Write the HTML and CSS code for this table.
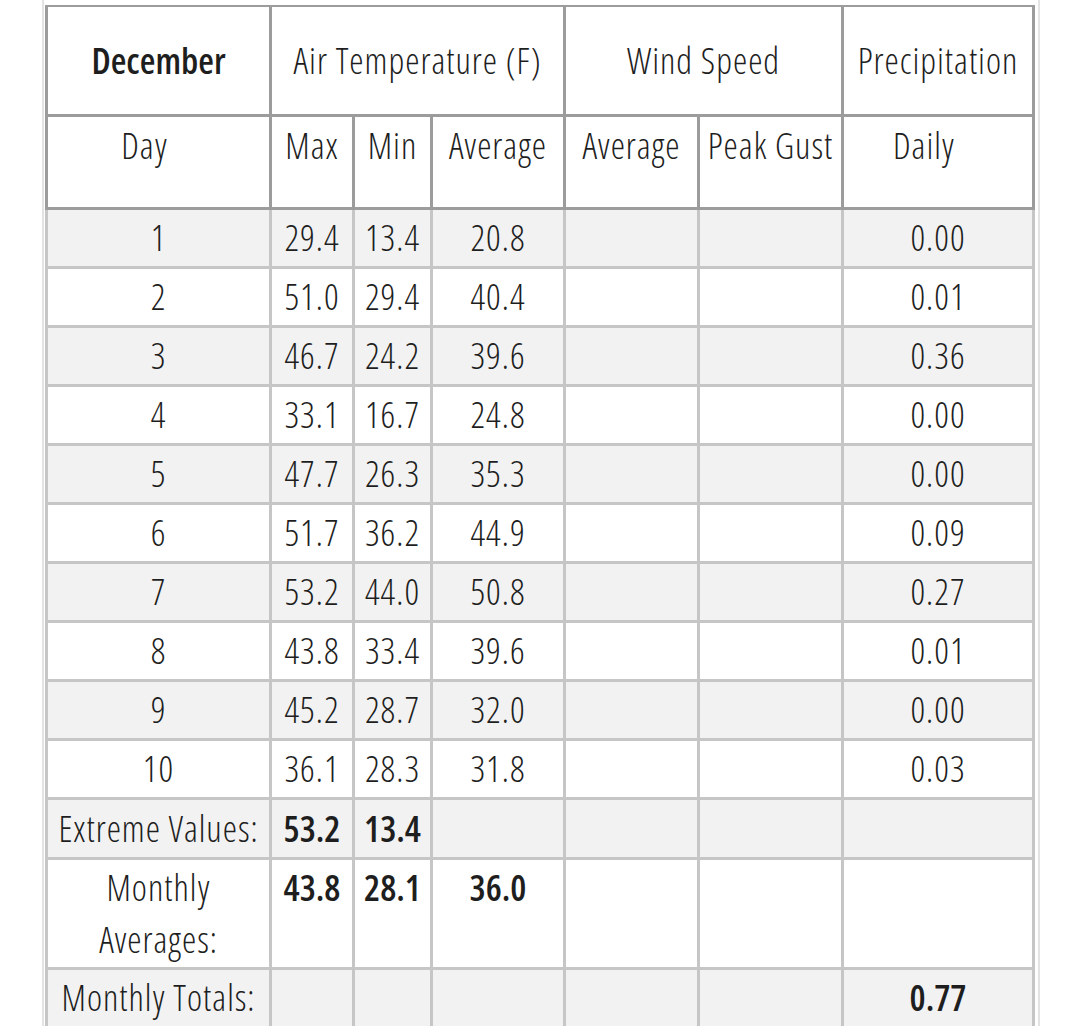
FILE: index.html
```html
<!DOCTYPE html>
<html lang="en">
<head>
<meta charset="utf-8">
<title>December Weather</title>
<link rel="stylesheet" href="styles.css">
</head>
<body>
<div class="page">
  <table class="wx">
    <colgroup>
      <col class="c-day">
      <col class="c-max">
      <col class="c-min">
      <col class="c-avg">
      <col class="c-wavg">
      <col class="c-gust">
      <col class="c-daily">
    </colgroup>
    <thead>
      <tr class="hr1">
        <th class="first month">December</th>
        <th colspan="3">Air Temperature (F)</th>
        <th colspan="2">Wind Speed</th>
        <th>Precipitation</th>
      </tr>
      <tr class="hr2">
        <th class="first shift">Day</th>
        <th>Max</th>
        <th>Min</th>
        <th>Average</th>
        <th>Average</th>
        <th>Peak Gust</th>
        <th class="shift">Daily</th>
      </tr>
    </thead>
    <tbody>
      <tr class="odd"><td class="first">1</td><td>29.4</td><td>13.4</td><td>20.8</td><td></td><td></td><td>0.00</td></tr>
      <tr><td class="first">2</td><td>51.0</td><td>29.4</td><td>40.4</td><td></td><td></td><td>0.01</td></tr>
      <tr class="odd"><td class="first">3</td><td>46.7</td><td>24.2</td><td>39.6</td><td></td><td></td><td>0.36</td></tr>
      <tr><td class="first">4</td><td>33.1</td><td>16.7</td><td>24.8</td><td></td><td></td><td>0.00</td></tr>
      <tr class="odd"><td class="first">5</td><td>47.7</td><td>26.3</td><td>35.3</td><td></td><td></td><td>0.00</td></tr>
      <tr><td class="first">6</td><td>51.7</td><td>36.2</td><td>44.9</td><td></td><td></td><td>0.09</td></tr>
      <tr class="odd"><td class="first">7</td><td>53.2</td><td>44.0</td><td>50.8</td><td></td><td></td><td>0.27</td></tr>
      <tr><td class="first">8</td><td>43.8</td><td>33.4</td><td>39.6</td><td></td><td></td><td>0.01</td></tr>
      <tr class="odd"><td class="first">9</td><td>45.2</td><td>28.7</td><td>32.0</td><td></td><td></td><td>0.00</td></tr>
      <tr><td class="first">10</td><td>36.1</td><td>28.3</td><td>31.8</td><td></td><td></td><td>0.03</td></tr>
      <tr class="odd extreme"><td class="first">Extreme Values:</td><td class="b">53.2</td><td class="b">13.4</td><td></td><td></td><td></td><td></td></tr>
      <tr class="avgs"><td class="first">Monthly<br>Averages:</td><td class="b">43.8</td><td class="b">28.1</td><td class="b">36.0</td><td></td><td></td><td></td></tr>
      <tr class="odd totals"><td class="first">Monthly Totals:</td><td></td><td></td><td></td><td></td><td></td><td class="b">0.77</td></tr>
    </tbody>
  </table>
</div>
</body>
</html>
```

FILE: styles.css
```css
html, body {
  margin: 0;
  padding: 0;
  background: #ffffff;
}

body {
  font-family: "Open Sans", "DejaVu Sans Condensed", sans-serif;
  font-stretch: 75%;
  font-weight: 300;
  font-size: 36px;
  letter-spacing: 1px;
  line-height: 52px;
  color: #1e1e1e;
}

.page {
  margin-left: 42px;
  width: 992px;
  min-height: 1100px;
  border-left: 2px solid #e3e3e3;
  border-right: 2px solid #e3e3e3;
  padding: 5px 1px 0 1px;
  box-sizing: content-box;
}

.wx {
  width: 990px;
  table-layout: fixed;
  border-collapse: separate;
  border-spacing: 0;
}

.c-day { width: 227px; }
.c-max { width: 83px; }
.c-min { width: 78px; }
.c-avg { width: 133px; }
.c-wavg { width: 134px; }
.c-gust { width: 144px; }
.c-daily { width: 191px; }

.wx th,
.wx td {
  padding: 0 2px;
  text-align: center;
  white-space: nowrap;
  overflow: hidden;
}

.wx th {
  font-weight: 300;
  border-right: 3px solid #9c9c9c;
  border-bottom: 3px solid #9c9c9c;
}

.wx th.first {
  border-left: 3px solid #9c9c9c;
}

.hr1 th {
  border-top: 2px solid #9c9c9c;
  vertical-align: middle;
}

.hr1 {
  height: 112px;
}

.hr1 th.month {
  font-weight: 600;
  letter-spacing: 0;
}

.hr2 {
  height: 93px;
}

.hr2 th {
  vertical-align: top;
  padding-top: 3px;
}

.hr2 th.shift {
  padding-right: 30px;
}

.wx td {
  border-right: 3px solid #c6c6c6;
  border-bottom: 3px solid #c6c6c6;
  vertical-align: middle;
}

.wx td.first {
  border-left: 3px solid #c6c6c6;
}

.wx tbody tr {
  height: 59px;
}

.wx tbody tr.odd td {
  background: #f2f2f2;
}

.wx tbody tr.extreme {
  height: 60px;
}

.wx tbody tr.avgs {
  height: 110px;
}

.wx tbody tr.avgs td {
  vertical-align: top;
  padding-top: 2px;
}

.wx td.b {
  font-weight: 600;
  letter-spacing: 0;
}
```
